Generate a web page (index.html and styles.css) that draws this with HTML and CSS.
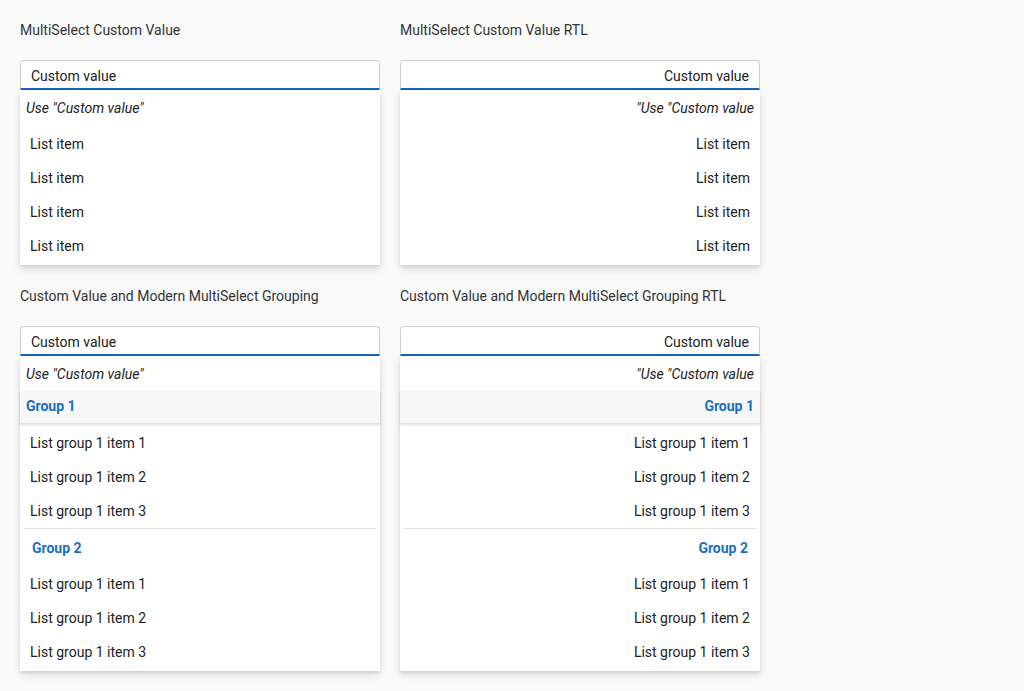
FILE: index.html
```html
<!DOCTYPE html>
<html lang="en">
<head>
<meta charset="utf-8">
<title>MultiSelect Custom Value</title>
<link rel="stylesheet" href="styles.css">
</head>
<body>
<main class="demos">
  <section class="demo">
    <h2 class="demo-title">MultiSelect Custom Value</h2>
    <div class="ms-input"><span class="ms-value">Custom value</span></div>
    <div class="popup">
      <div class="custom-row">Use "Custom value"</div>
      <ul class="list">
        <li class="item">List item</li>
        <li class="item">List item</li>
        <li class="item">List item</li>
        <li class="item">List item</li>
      </ul>
    </div>
  </section>
  <section class="demo" dir="rtl">
    <h2 class="demo-title" dir="ltr">MultiSelect Custom Value RTL</h2>
    <div class="ms-input"><span class="ms-value">Custom value</span></div>
    <div class="popup">
      <div class="custom-row">Use "Custom value"</div>
      <ul class="list">
        <li class="item">List item</li>
        <li class="item">List item</li>
        <li class="item">List item</li>
        <li class="item">List item</li>
      </ul>
    </div>
  </section>
  <section class="demo">
    <h2 class="demo-title">Custom Value and Modern MultiSelect Grouping</h2>
    <div class="ms-input"><span class="ms-value">Custom value</span></div>
    <div class="popup">
      <div class="custom-row">Use "Custom value"</div>
      <div class="group-sticky">Group 1</div>
      <ul class="list">
        <li class="item">List group 1 item 1</li>
        <li class="item">List group 1 item 2</li>
        <li class="item">List group 1 item 3</li>
        <li class="group-header">Group 2</li>
        <li class="item">List group 1 item 1</li>
        <li class="item">List group 1 item 2</li>
        <li class="item">List group 1 item 3</li>
      </ul>
    </div>
  </section>
  <section class="demo" dir="rtl">
    <h2 class="demo-title" dir="ltr">Custom Value and Modern MultiSelect Grouping RTL</h2>
    <div class="ms-input"><span class="ms-value">Custom value</span></div>
    <div class="popup">
      <div class="custom-row">Use "Custom value"</div>
      <div class="group-sticky">Group 1</div>
      <ul class="list">
        <li class="item">List group 1 item 1</li>
        <li class="item">List group 1 item 2</li>
        <li class="item">List group 1 item 3</li>
        <li class="group-header">Group 2</li>
        <li class="item">List group 1 item 1</li>
        <li class="item">List group 1 item 2</li>
        <li class="item">List group 1 item 3</li>
      </ul>
    </div>
  </section>
</main>
</body>
</html>
```

FILE: styles.css
```css
* {
  box-sizing: border-box;
}

html, body {
  margin: 0;
  padding: 0;
  background: #fafafa;
}

body {
  font-family: Roboto, "Noto Sans", "Liberation Sans", sans-serif;
  font-size: 14px;
  line-height: 20px;
  color: #222222;
}

.demos {
  display: grid;
  grid-template-columns: 360px 360px;
  column-gap: 20px;
  row-gap: 21px;
  padding: 20px;
  align-items: start;
}

.demo {
  display: flex;
  flex-direction: column;
}

.demo-title {
  margin: 0 0 20px;
  font-size: 14px;
  font-weight: 400;
  line-height: 20px;
  color: #333333;
  text-align: left;
}

.ms-input {
  height: 30px;
  background: #ffffff;
  border: 1px solid #cfcfcf;
  border-bottom: 2px solid #1565c0;
  border-radius: 4px 4px 0 0;
  padding: 2px 10px 0;
  display: flex;
  align-items: center;
  color: #212121;
}

.popup {
  background: #ffffff;
  box-shadow: 0 4px 8px rgba(0, 0, 0, 0.12), 0 2px 3px rgba(0, 0, 0, 0.08);
}

.custom-row {
  height: 34px;
  display: flex;
  align-items: center;
  padding: 2px 6px 0;
  font-style: italic;
  color: #222222;
}

.group-sticky {
  height: 33px;
  display: flex;
  align-items: center;
  padding: 0 6px 2px;
  background: #f7f7f7;
  color: #1a6ec0;
  font-weight: 700;
  box-shadow: 0 2px 3px rgba(0, 0, 0, 0.13);
  position: relative;
}

.list {
  list-style: none;
  margin: 0;
  padding: 3px 0 2px;
}

.item {
  height: 34px;
  display: flex;
  align-items: center;
  padding: 0 10px;
  color: #222222;
}

.group-header {
  height: 39px;
  display: flex;
  align-items: center;
  margin: 0 4px;
  padding: 0 8px 1px;
  border-top: 1px solid #e2e2e2;
  color: #1a6ec0;
  font-weight: 700;
}
```
